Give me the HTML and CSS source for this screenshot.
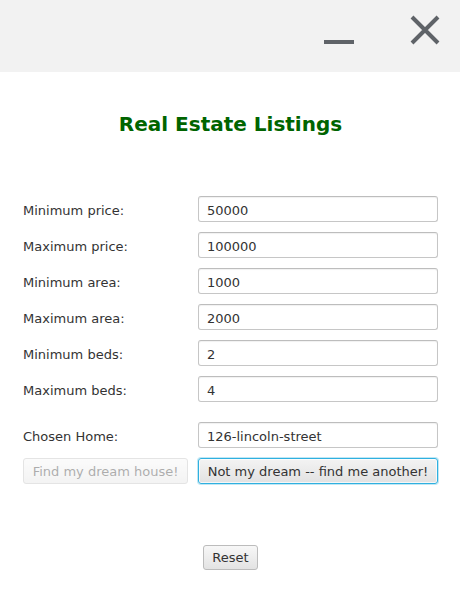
FILE: index.html
```html
<!DOCTYPE html>
<html lang="en">
<head>
<meta charset="utf-8">
<title>Real Estate Listings</title>
<link rel="stylesheet" href="styles.css">
</head>
<body>
<div class="window">
  <header class="titlebar">
    <svg class="tb-icon" width="30" height="30" viewBox="0 0 30 30" aria-label="Minimize"><rect x="0" y="25" width="30" height="4" fill="#5f6368"/></svg>
    <svg class="tb-icon" width="30" height="30" viewBox="0 0 30 30" aria-label="Close"><path d="M2 2 L28 28 M28 2 L2 28" stroke="#5f6368" stroke-width="4" fill="none"/></svg>
  </header>
  <main class="content">
    <h1 class="title">Real Estate Listings</h1>
    <div class="form">
      <label class="lbl">Minimum price:</label><input class="field" type="text" value="50000">
      <label class="lbl">Maximum price:</label><input class="field" type="text" value="100000">
      <label class="lbl">Minimum area:</label><input class="field" type="text" value="1000">
      <label class="lbl">Maximum area:</label><input class="field" type="text" value="2000">
      <label class="lbl">Minimum beds:</label><input class="field" type="text" value="2">
      <label class="lbl">Maximum beds:</label><input class="field" type="text" value="4">
    </div>
    <div class="form form-choice">
      <label class="lbl">Chosen Home:</label><input class="field" type="text" value="126-lincoln-street">
      <button class="btn" disabled>Find my dream house!</button><button class="btn btn-focus">Not my dream -- find me another!</button>
    </div>
    <div class="reset-row">
      <button class="btn btn-reset">Reset</button>
    </div>
  </main>
</div>
</body>
</html>
```
FILE: styles.css
```css
html, body {
  margin: 0;
  padding: 0;
  background: #ffffff;
}
body {
  font-family: "DejaVu Sans", "Liberation Sans", sans-serif;
  font-size: 13px;
  color: #333333;
}
.window {
  width: 460px;
  height: 595px;
  overflow: hidden;
}
.titlebar {
  height: 72px;
  box-sizing: border-box;
  background: #f2f2f2;
  display: flex;
  justify-content: flex-end;
  align-items: flex-start;
  padding: 15px 20px 0 0;
  gap: 56px;
}
.tb-icon {
  display: block;
}
.content {
  padding: 0 22px 0 23px;
}
.title {
  margin: 40px 0 0 0;
  font-size: 20px;
  line-height: 24px;
  font-weight: bold;
  color: #006400;
  text-align: center;
}
.form {
  display: grid;
  grid-template-columns: 165px 240px;
  column-gap: 10px;
  row-gap: 10px;
  align-items: start;
  margin-top: 60px;
}
.form-choice {
  margin-top: 20px;
}
.lbl {
  display: block;
  padding-top: 7px;
  line-height: 15px;
  color: #333333;
}
.field {
  box-sizing: border-box;
  height: 26px;
  width: 240px;
  margin: 0;
  padding: 6px 8px 3px 8px;
  font-family: "DejaVu Sans", "Liberation Sans", sans-serif;
  font-size: 13px;
  line-height: 15px;
  color: #333333;
  background: #ffffff;
  border: 1px solid #c6c6c6;
  border-top-color: #bdbdbd;
  border-radius: 3px;
  box-shadow: inset 0 1px 1px rgba(0,0,0,0.06);
  outline: none;
}
.btn {
  box-sizing: border-box;
  height: 26px;
  margin: 0;
  padding: 5px 8px 4px 8px;
  font-family: "DejaVu Sans", "Liberation Sans", sans-serif;
  font-size: 13px;
  line-height: 15px;
  color: #333333;
  background: linear-gradient(#f7f7f7, #e3e3e3);
  border: 1px solid #bcbcbc;
  border-radius: 3px;
  white-space: nowrap;
  text-align: center;
}
.btn:disabled {
  opacity: 0.4;
}
.btn-focus {
  border-color: #2fb0e0;
  background: linear-gradient(#f3f3f3, #e2e2e2);
  box-shadow: inset 0 0 0 1px rgba(255,255,255,0.7), 0 0 0 1px rgba(3,158,211,0.25);
}
.reset-row {
  display: flex;
  justify-content: center;
  margin-top: 61px;
}
.btn-reset {
  height: 25px;
  padding: 4px 8px;
}
```
